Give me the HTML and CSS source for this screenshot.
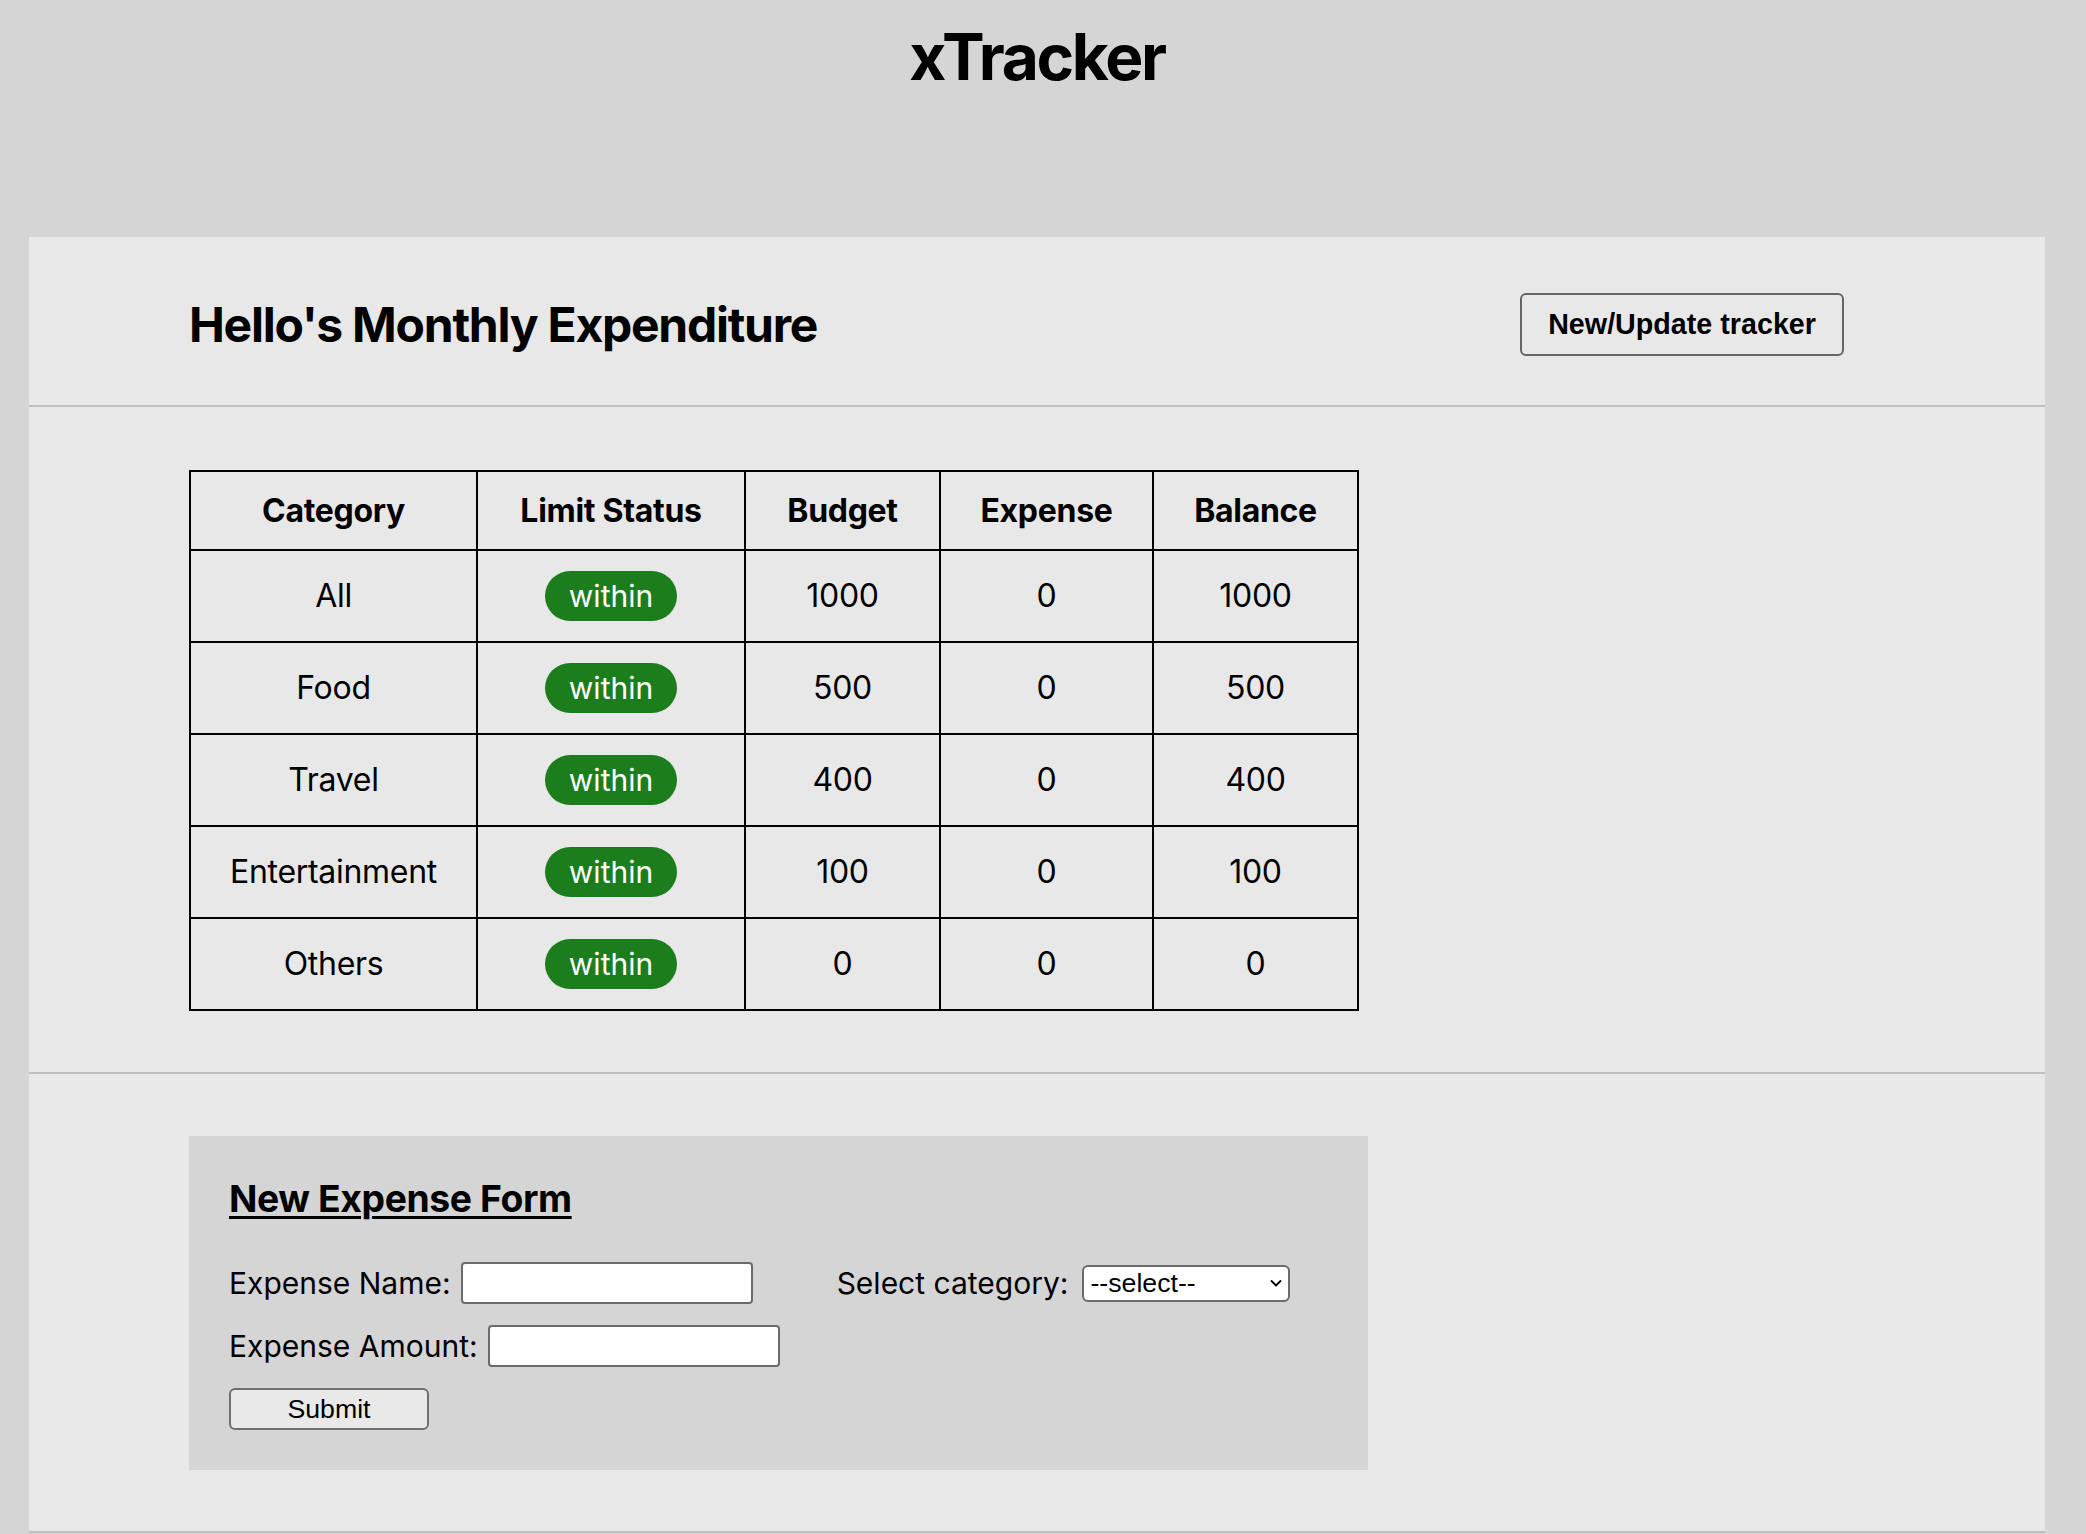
FILE: index.html
```html
<!DOCTYPE html>
<html lang="en">
<head>
    <meta charset="UTF-8">
    <meta name="viewport" content="width=device-width, initial-scale=1.0">
    <title>xTracker</title>
    <link rel="stylesheet" href="styles.css">
</head>
<body>
    <div class="app">
        <h1>xTracker</h1>
        <div class="tracker">
            <div class="tracker-head">
                <h2>Hello's Monthly Expenditure</h2>
                <button class="update-btn">New/Update tracker</button>
            </div>
            <div class="tracker-table">
                <table>
                    <thead>
                        <tr>
                            <th class="col-cat">Category</th>
                            <th class="col-status">Limit Status</th>
                            <th class="col-budget">Budget</th>
                            <th class="col-expense">Expense</th>
                            <th class="col-balance">Balance</th>
                        </tr>
                    </thead>
                    <tbody>
                        <tr>
                            <td>All</td>
                            <td><span class="status">within</span></td>
                            <td>1000</td>
                            <td>0</td>
                            <td>1000</td>
                        </tr>
                        <tr>
                            <td>Food</td>
                            <td><span class="status">within</span></td>
                            <td>500</td>
                            <td>0</td>
                            <td>500</td>
                        </tr>
                        <tr>
                            <td>Travel</td>
                            <td><span class="status">within</span></td>
                            <td>400</td>
                            <td>0</td>
                            <td>400</td>
                        </tr>
                        <tr>
                            <td>Entertainment</td>
                            <td><span class="status">within</span></td>
                            <td>100</td>
                            <td>0</td>
                            <td>100</td>
                        </tr>
                        <tr>
                            <td>Others</td>
                            <td><span class="status">within</span></td>
                            <td>0</td>
                            <td>0</td>
                            <td>0</td>
                        </tr>
                    </tbody>
                </table>
            </div>
            <div class="tracker-form">
                <form class="expense-form">
                    <h3>New Expense Form</h3>
                    <div class="form-row">
                        <label class="name-field">Expense Name: <input type="text" class="text-input"></label>
                        <label class="cat-field">Select category:
                            <span class="select-wrap">
                                <select class="cat-select">
                                    <option>--select--</option>
                                    <option>Food</option>
                                    <option>Travel</option>
                                    <option>Entertainment</option>
                                    <option>Others</option>
                                </select>
                                <svg class="select-arrow" width="12" height="8" viewBox="0 0 12 8">
                                    <path d="M1 1.5 L6 6.5 L11 1.5" fill="none" stroke="#000" stroke-width="1.8"/>
                                </svg>
                            </span>
                        </label>
                    </div>
                    <div class="form-row">
                        <label>Expense Amount: <input type="number" class="text-input"></label>
                    </div>
                    <button type="submit" class="submit-btn">Submit</button>
                </form>
            </div>
        </div>
    </div>
</body>
</html>
```

FILE: styles.css
```css
*{
  box-sizing: border-box;
}
body{
  margin: 0;
  background: #d5d5d5;
  font-family: Inter, "Noto Sans", sans-serif;
  color: #000;
}
.app{
  margin: 0 41px 0 29px;
}
h1{
  margin: 18px 0 142px;
  text-align: center;
  font-size: 64px;
  font-weight: 700;
  letter-spacing: -2.3px;
}
.tracker{
  background: #e8e8e8;
}
.tracker-head{
  display: flex;
  justify-content: space-between;
  align-items: center;
  padding: 56px 201px 49px 160px;
  border-bottom: 2px solid #c0c0c0;
}
h2{
  margin: 0;
  font-size: 48px;
  font-weight: 700;
  letter-spacing: -1.25px;
}
.update-btn{
  height: 63px;
  padding: 0 26px;
  background: #e8e8e8;
  border: 2px solid #666;
  border-radius: 6px;
  font-family: "Liberation Sans", Arial, sans-serif;
  font-size: 28.7px;
  font-weight: 700;
  color: #000;
}
.tracker-table{
  padding: 63px 0 61px 160px;
  border-bottom: 2px solid #c0c0c0;
}
table{
  border-collapse: collapse;
  table-layout: fixed;
  width: 1168px;
  font-size: 32px;
}
th, td{
  border: 2px solid #000;
  padding: 20px 0;
  text-align: center;
  line-height: 38px;
  letter-spacing: -0.3px;
}
th{
  font-weight: 700;
  line-height: 37px;
}
.col-cat{ width: 287px; }
.col-status{ width: 268px; }
.col-budget{ width: 195px; }
.col-expense{ width: 213px; }
.col-balance{ width: 205px; }
.status{
  display: inline-block;
  vertical-align: middle;
  padding: 8px 24px;
  line-height: 34px;
  font-size: 30px;
  letter-spacing: 0;
  background: #1c7d1c;
  color: #fff;
  border-radius: 25px;
}
.tracker-form{
  padding: 62px 0 61px 160px;
  border-bottom: 2px solid #c0c0c0;
}
.expense-form{
  width: 1179px;
  padding: 40px;
  background: #d5d5d5;
}
h3{
  margin: 0 0 41px;
  font-size: 37.3px;
  font-weight: 700;
  line-height: 45px;
  letter-spacing: -0.4px;
  text-decoration: underline;
  text-decoration-thickness: 3px;
  text-underline-offset: 4px;
}
.form-row{
  display: flex;
  align-items: center;
  gap: 84px;
  height: 42px;
  margin-bottom: 21px;
}
label{
  display: flex;
  align-items: center;
  gap: 10px;
  font-size: 30px;
}
.cat-field{
  gap: 14px;
}
.text-input{
  width: 292px;
  height: 42px;
  background: #fff;
  border: 2px solid #6b6b6b;
  border-radius: 4px;
  font-family: "Liberation Sans", Arial, sans-serif;
  font-size: 26.7px;
}
.select-wrap{
  position: relative;
  display: inline-flex;
}
.cat-select{
  appearance: none;
  width: 208px;
  height: 37px;
  padding: 0 0 0 6px;
  background: #fff;
  border: 2px solid #6b6b6b;
  border-radius: 6px;
  font-family: "Liberation Sans", Arial, sans-serif;
  font-size: 26.7px;
  color: #000;
}
.select-arrow{
  position: absolute;
  right: 8px;
  top: 14px;
  pointer-events: none;
}
.submit-btn{
  width: 200px;
  height: 42px;
  background: #e9e9e9;
  border: 2px solid #707070;
  border-radius: 6px;
  font-family: "Liberation Sans", Arial, sans-serif;
  font-size: 26.7px;
  color: #000;
}
```
